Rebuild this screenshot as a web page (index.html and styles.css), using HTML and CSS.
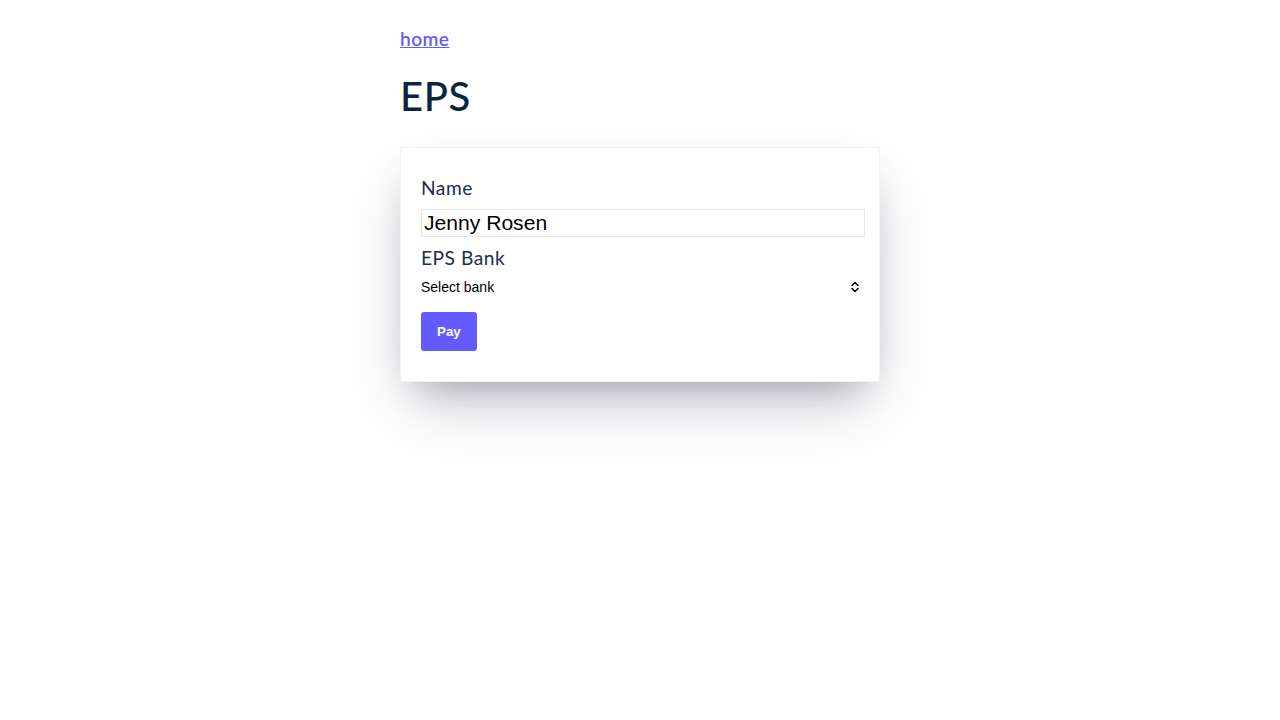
FILE: index.html
```
<!DOCTYPE html>
<html lang="en">
<head>
<meta charset="utf-8">
<title>EPS</title>
<link rel="stylesheet" href="styles.css">
</head>
<body>
<main class="page">
  <a class="home-link" href="#">home</a>
  <h1 class="title">EPS</h1>
  <form class="card">
    <label class="field-label" for="name">Name</label>
    <input class="text-input" id="name" type="text" value="Jenny Rosen">
    <label class="field-label" for="bank">EPS Bank</label>
    <div class="select-wrap">
      <select class="bank-select" id="bank">
        <option>Select bank</option>
      </select>
      <svg class="select-arrow" width="10" height="14" viewBox="0 0 10 14" aria-hidden="true">
        <path d="M2 5.5 L5 2.5 L8 5.5 M2 8.5 L5 11.5 L8 8.5" fill="none" stroke="#000" stroke-width="1.5" stroke-linecap="round" stroke-linejoin="round"/>
      </svg>
    </div>
    <button class="pay-btn" type="button">Pay</button>
  </form>
</main>
</body>
</html>
```
FILE: styles.css
```
html, body {
  margin: 0;
  background: #ffffff;
}
body {
  box-sizing: border-box;
  min-height: 100vh;
  padding: 27px 20px 20px;
  display: flex;
  justify-content: center;
  align-items: flex-start;
  font-family: Lato, "Noto Sans", sans-serif;
  font-size: 19.2px;
  color: #0a2540;
}
.page {
  width: 480px;
  display: flex;
  flex-direction: column;
  align-items: flex-start;
}
.home-link {
  color: #635bff;
  font-size: 19.2px;
  line-height: 23px;
  font-weight: 600;
  letter-spacing: 0.4px;
  text-decoration: underline;
}
.title {
  margin: 22px 0 27px;
  font-size: 40px;
  line-height: 48px;
  font-weight: 500;
  letter-spacing: 0.6px;
  color: #0a2540;
}
.card {
  align-self: stretch;
  display: flex;
  flex-direction: column;
  align-items: flex-start;
  padding: 20px;
  border: 1px solid #f2f2f4;
  border-radius: 2px;
  background: #fff;
  box-shadow: 0 30px 60px -12px rgba(50, 50, 93, 0.25), 0 18px 36px -18px rgba(0, 0, 0, 0.3);
}
.field-label {
  display: block;
  font-size: 19.2px;
  line-height: 23px;
  font-weight: 400;
  letter-spacing: 0.5px;
  color: #1a2e4a;
}
.card > .field-label:first-child {
  margin-top: 8px;
}
.text-input {
  box-sizing: border-box;
  width: 444px;
  height: 28px;
  margin: 10px 0 9px;
  padding: 1px 2px;
  border: 1px solid #e6e6e6;
  font-family: "Liberation Sans", Arial, sans-serif;
  font-size: 21.1px;
  color: #000;
  outline: none;
}
.select-wrap {
  position: relative;
  align-self: stretch;
  margin-top: 8px;
}
.bank-select {
  display: block;
  box-sizing: border-box;
  width: 444px;
  height: 19px;
  padding: 0;
  border: none;
  background: transparent;
  -webkit-appearance: none;
  appearance: none;
  font-family: "Liberation Sans", Arial, sans-serif;
  font-size: 14px;
  color: #000;
  outline: none;
}
.select-arrow {
  position: absolute;
  right: -1px;
  top: 3px;
  pointer-events: none;
}
.pay-btn {
  margin: 16px 0 10px;
  padding: 12px 16px;
  border: 0;
  border-radius: 3px;
  background: #635bff;
  color: #fff;
  font-family: "Liberation Sans", Arial, sans-serif;
  font-size: 13.33px;
  line-height: 15px;
  font-weight: 700;
  cursor: pointer;
}
```
